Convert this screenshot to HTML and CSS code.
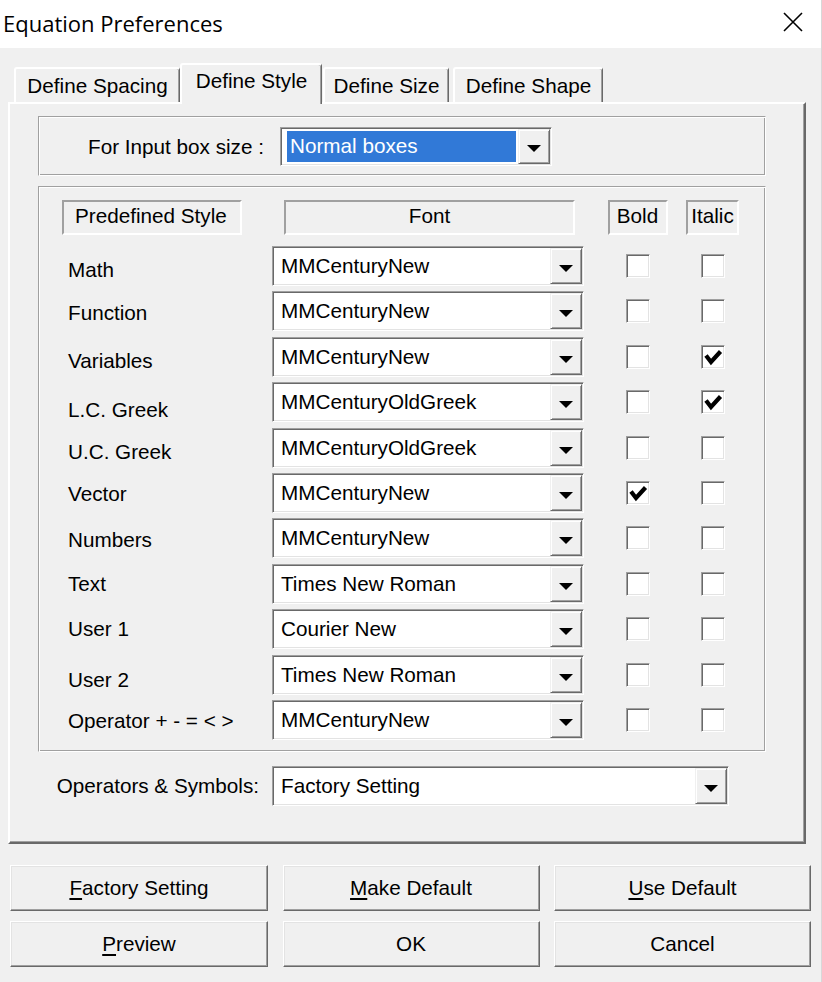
FILE: index.html
```html
<!DOCTYPE html>
<html lang="en">
<head>
<meta charset="utf-8">
<title>Equation Preferences</title>
<link rel="stylesheet" href="styles.css">
</head>
<body>
<div class="window">
  <div class="titlebar">
    <span class="title">Equation Preferences</span>
    <span class="close"><svg width="20" height="20" viewBox="0 0 20 20"><path d="M1 1L19 19M19 1L1 19" stroke="#000" stroke-width="1.6" fill="none"/></svg></span>
  </div>
  <div class="client">
    <div class="tabs">
      <div class="tab tab-spacing">Define Spacing</div>
      <div class="tab tab-style active">Define Style</div>
      <div class="tab tab-size">Define Size</div>
      <div class="tab tab-shape">Define Shape</div>
    </div>
    <div class="panel">
      <div class="group group-size">
        <span class="size-label">For Input box size :</span>
        <div class="combo combo-input"><span class="combo-text selected">Normal boxes</span><span class="drop"></span></div>
      </div>
      <div class="group group-styles">
        <div class="hdr hdr-style">Predefined Style</div>
        <div class="hdr hdr-font">Font</div>
        <div class="hdr hdr-bold">Bold</div>
        <div class="hdr hdr-italic">Italic</div>

        <div class="lbl n4">Math</div>
        <div class="combo"><span class="combo-text">MMCenturyNew</span><span class="drop"></span></div>
        <div class="cb cb-b"></div>
        <div class="cb cb-i"></div>

        <div class="lbl">Function</div>
        <div class="combo"><span class="combo-text">MMCenturyNew</span><span class="drop"></span></div>
        <div class="cb cb-b"></div>
        <div class="cb cb-i"></div>

        <div class="lbl n4">Variables</div>
        <div class="combo"><span class="combo-text">MMCenturyNew</span><span class="drop"></span></div>
        <div class="cb cb-b"></div>
        <div class="cb cb-i"><svg class="tick" width="20" height="20" viewBox="0 0 20 20"><polyline points="3,8.5 8,15 17.5,4.5" fill="none" stroke="#000" stroke-width="4.2" stroke-linejoin="miter"/></svg></div>

        <div class="lbl n8">L.C. Greek</div>
        <div class="combo"><span class="combo-text">MMCenturyOldGreek</span><span class="drop"></span></div>
        <div class="cb cb-b"></div>
        <div class="cb cb-i"><svg class="tick" width="20" height="20" viewBox="0 0 20 20"><polyline points="3,8.5 8,15 17.5,4.5" fill="none" stroke="#000" stroke-width="4.2" stroke-linejoin="miter"/></svg></div>

        <div class="lbl n4">U.C. Greek</div>
        <div class="combo"><span class="combo-text">MMCenturyOldGreek</span><span class="drop"></span></div>
        <div class="cb cb-b"></div>
        <div class="cb cb-i"></div>

        <div class="lbl">Vector</div>
        <div class="combo"><span class="combo-text">MMCenturyNew</span><span class="drop"></span></div>
        <div class="cb cb-b"><svg class="tick" width="20" height="20" viewBox="0 0 20 20"><polyline points="3,8.5 8,15 17.5,4.5" fill="none" stroke="#000" stroke-width="4.2" stroke-linejoin="miter"/></svg></div>
        <div class="cb cb-i"></div>

        <div class="lbl">Numbers</div>
        <div class="combo"><span class="combo-text">MMCenturyNew</span><span class="drop"></span></div>
        <div class="cb cb-b"></div>
        <div class="cb cb-i"></div>

        <div class="lbl n0">Text</div>
        <div class="combo"><span class="combo-text">Times New Roman</span><span class="drop"></span></div>
        <div class="cb cb-b"></div>
        <div class="cb cb-i"></div>

        <div class="lbl n0">User 1</div>
        <div class="combo"><span class="combo-text">Courier New</span><span class="drop"></span></div>
        <div class="cb cb-b"></div>
        <div class="cb cb-i"></div>

        <div class="lbl n5">User 2</div>
        <div class="combo"><span class="combo-text">Times New Roman</span><span class="drop"></span></div>
        <div class="cb cb-b"></div>
        <div class="cb cb-i"></div>

        <div class="lbl">Operator + - = &lt; &gt;</div>
        <div class="combo"><span class="combo-text">MMCenturyNew</span><span class="drop"></span></div>
        <div class="cb cb-b"></div>
        <div class="cb cb-i"></div>
      </div>
      <div class="ops">
        <span class="ops-label">Operators &amp; Symbols:</span>
        <div class="combo combo-ops"><span class="combo-text">Factory Setting</span><span class="drop"></span></div>
      </div>
    </div>
    <div class="buttons">
      <div class="btn"><span><u>F</u>actory Setting</span></div>
      <div class="btn"><span><u>M</u>ake Default</span></div>
      <div class="btn"><span><u>U</u>se Default</span></div>
      <div class="btn"><span><u>P</u>review</span></div>
      <div class="btn"><span>OK</span></div>
      <div class="btn"><span>Cancel</span></div>
    </div>
  </div>
</div>
</body>
</html>
```
FILE: styles.css
```css
* { box-sizing: border-box; }
html, body { margin: 0; padding: 0; }
body {
  width: 822px;
  height: 982px;
  overflow: hidden;
  font-family: "Liberation Sans", Arial, sans-serif;
  font-size: 20.7px;
  color: #000;
  background: #f0f0f0;
}
.window {
  width: 822px;
  height: 982px;
  display: flex;
  flex-direction: column;
  border-right: 1px solid #d8d8d8;
  background: #f0f0f0;
}
.titlebar {
  height: 48px;
  flex: none;
  background: #fff;
  display: flex;
  justify-content: space-between;
  align-items: center;
  padding-left: 3px;
}
.title {
  font-family: "Open Sans", sans-serif;
  font-size: 22px;
  padding-bottom: 3px;
  color: #000;
}
.close {
  align-self: flex-start;
  margin-top: 12px;
  margin-right: 18px;
  width: 20px;
  height: 20px;
}
.close svg { display: block; }
.client {
  flex: 1;
  padding-left: 8px;
}
.tabs {
  display: flex;
  align-items: flex-end;
  height: 39px;
  margin-top: 15px;
  padding-left: 6px;
}
.tab {
  height: 35px;
  display: flex;
  align-items: center;
  justify-content: center;
  background: #f0f0f0;
  border-top: 2px solid #fff;
  border-left: 2px solid #fff;
  border-right: 1px solid #696969;
  box-shadow: inset -1px 0 #a0a0a0;
  border-radius: 3px 3px 0 0;
  white-space: nowrap;
}
.tab-spacing { width: 166px; }
.tab-style { width: 142px; }
.tab-size { width: 126px; margin-left: 1px; }
.tab-shape { width: 150px; margin-left: 4px; }
.tab.active {
  height: 41px;
  margin-bottom: -2px;
  padding-bottom: 8px;
  position: relative;
  z-index: 1;
}
.panel {
  width: 798px;
  height: 742px;
  border: 2px solid;
  border-color: #fff #696969 #696969 #fff;
  box-shadow: inset -1px -1px #a0a0a0;
  padding: 12px 0 0 28px;
}
.group {
  width: 728px;
  border: 1px solid;
  border-color: #a0a0a0 #fff #fff #a0a0a0;
  box-shadow: inset 1px 1px #fff, inset -1px -1px #a0a0a0;
}
.group-size {
  height: 60px;
  display: flex;
  align-items: center;
  padding-left: 49px;
}
.size-label {
  width: 192px;
  white-space: nowrap;
  padding-top: 1px;
}
.combo {
  display: flex;
  align-items: center;
  height: 40px;
  background: #fff;
  border: 1px solid;
  border-color: #a0a0a0 #fff #fff #a0a0a0;
  box-shadow: inset 1px 1px #696969, inset -1px -1px #e3e3e3;
  padding: 1px;
}
.combo-input { width: 272px; height: 39px; }
.combo-text {
  padding-left: 7px;
  white-space: nowrap;
  flex: 1;
  overflow: hidden;
}
.combo-text.selected {
  align-self: stretch;
  display: flex;
  align-items: center;
  margin: 2px 2px 2px 5px;
  padding-left: 3px;
  background: #3179d7;
  color: #fff;
}
.drop {
  width: 32px;
  flex: none;
  align-self: stretch;
  margin-left: auto;
  background: #f0f0f0;
  border: 1px solid;
  border-color: #f0f0f0 #696969 #696969 #f0f0f0;
  box-shadow: inset 1px 1px #fff, inset -1px -1px #a0a0a0;
  display: flex;
  align-items: center;
  justify-content: center;
}
.drop::after {
  content: "";
  margin-top: 5px;
  border-left: 7px solid transparent;
  border-right: 7px solid transparent;
  border-top: 7px solid #000;
}
.group-styles {
  margin-top: 10px;
  height: 566px;
  padding: 13px 0 0 23px;
  display: grid;
  grid-template-columns: 210px 312px 16px 75px 75px;
  grid-template-rows: 40.6px repeat(11, 40px);
  row-gap: 5.4px;
}
.hdr {
  height: 35px;
  align-self: start;
  border: 2px solid;
  border-color: #a0a0a0 #fff #fff #a0a0a0;
  display: flex;
  align-items: center;
  padding-bottom: 3px;
  white-space: nowrap;
}
.hdr-style { grid-column: 1; width: 180px; padding-left: 11px; }
.hdr-font { grid-column: 2; margin: 0 9px 0 12px; justify-content: center; }
.hdr-bold { grid-column: 4; width: 60px; justify-self: center; justify-content: center; }
.hdr-italic { grid-column: 5; width: 53px; justify-self: center; justify-content: center; }
.lbl {
  grid-column: 1;
  align-self: center;
  padding-left: 6px;
  padding-top: 3px;
  white-space: nowrap;
}
.lbl.n0 { padding-top: 0; }
.lbl.n4 { padding-top: 8px; }
.lbl.n5 { padding-top: 10px; }
.lbl.n8 { padding-top: 16px; }
.group-styles .combo { grid-column: 2; }
.cb {
  width: 24px;
  height: 24px;
  justify-self: center;
  align-self: center;
  background: #fff;
  border: 1px solid;
  border-color: #a0a0a0 #fff #fff #a0a0a0;
  box-shadow: inset 1px 1px #696969, inset -1px -1px #e3e3e3;
  padding: 1px;
}
.cb-b { grid-column: 4; }
.cb-i { grid-column: 5; }
.tick { display: block; }
.ops {
  display: grid;
  grid-template-columns: 234px 457px;
  align-items: center;
  margin-top: 14px;
}
.ops-label {
  justify-self: end;
  padding-right: 13px;
  white-space: nowrap;
}
.combo-ops { height: 40px; }
.buttons {
  display: grid;
  grid-template-columns: 258px 257px 257px;
  grid-auto-rows: 46px;
  column-gap: 14.5px;
  row-gap: 10px;
  margin: 21px 0 0 2px;
}
.btn {
  border: 1px solid;
  border-color: #fff #696969 #696969 #fff;
  box-shadow: inset -1px -1px #a0a0a0, inset 1px 1px #e3e3e3;
  display: flex;
  align-items: center;
  justify-content: center;
  background: #f0f0f0;
  white-space: nowrap;
}
.btn u { text-underline-offset: 3px; }
```
